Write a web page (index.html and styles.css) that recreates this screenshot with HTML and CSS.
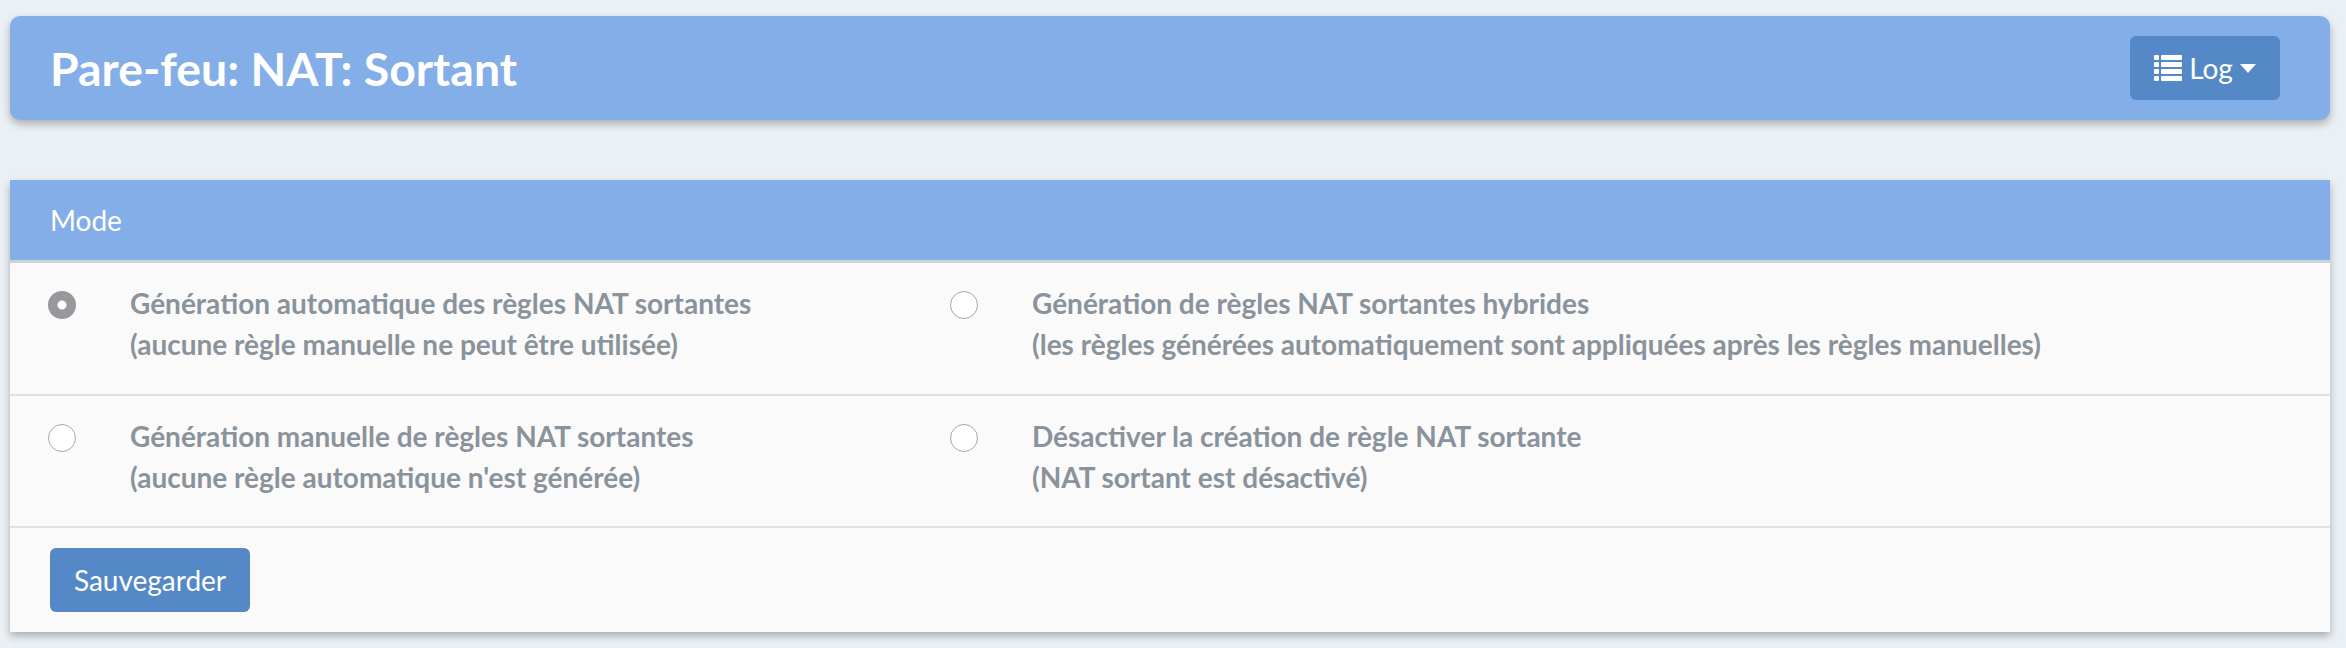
FILE: index.html
```html
<!DOCTYPE html>
<html lang="fr">

<head>
    <meta charset="UTF-8">
    <title>Pare-feu: NAT: Sortant</title>
    <link rel="stylesheet" href="styles.css">
</head>

<body>
    <header class="pageHeader">
        <h1>Pare-feu: NAT: Sortant</h1>
        <button class="btn logBtn">
            <svg class="listIcon" viewBox="0 0 28 26" width="28" height="26">
                <rect x="0" y="0" width="5" height="5" rx="1"></rect>
                <rect x="0" y="7" width="5" height="5" rx="1"></rect>
                <rect x="0" y="14" width="5" height="5" rx="1"></rect>
                <rect x="0" y="21" width="5" height="5" rx="1"></rect>
                <rect x="7" y="0" width="21" height="5" rx="1"></rect>
                <rect x="7" y="7" width="21" height="5" rx="1"></rect>
                <rect x="7" y="14" width="21" height="5" rx="1"></rect>
                <rect x="7" y="21" width="21" height="5" rx="1"></rect>
            </svg>
            <span>Log</span>
            <span class="caret"></span>
        </button>
    </header>

    <section class="panel">
        <h2 class="panelTitle">Mode</h2>
        <div class="modeRow">
            <label class="modeOption">
                <input type="radio" name="mode" checked>
                <span>Génération automatique des règles NAT sortantes<br>(aucune règle manuelle ne peut être utilisée)</span>
            </label>
            <label class="modeOption">
                <input type="radio" name="mode">
                <span>Génération de règles NAT sortantes hybrides<br>(les règles générées automatiquement sont appliquées après les règles manuelles)</span>
            </label>
        </div>
        <div class="modeRow">
            <label class="modeOption">
                <input type="radio" name="mode">
                <span>Génération manuelle de règles NAT sortantes<br>(aucune règle automatique n'est générée)</span>
            </label>
            <label class="modeOption">
                <input type="radio" name="mode">
                <span>Désactiver la création de règle NAT sortante<br>(NAT sortant est désactivé)</span>
            </label>
        </div>
        <div class="panelFooter">
            <button class="btn saveBtn">Sauvegarder</button>
        </div>
    </section>
</body>

</html>
```

FILE: styles.css
```css
html {
    background-color: #ebf0f4;
}

body {
    margin: 0;
    padding: 16px 16px 16px 10px;
    font-family: "Lato", sans-serif;
}

.pageHeader {
    height: 104px;
    padding: 0 50px 0 40px;
    display: flex;
    justify-content: space-between;
    align-items: center;
    background-color: #83aee7;
    border-radius: 10px;
    box-shadow: 0 4px 8px rgba(0, 0, 0, 0.28);
}

.pageHeader h1 {
    margin: 0;
    color: white;
    font-size: 46.4px;
    font-weight: 700;
}

.btn {
    color: white;
    background-color: #5488c6;
    border: 0;
    border-radius: 6px;
    height: 64px;
    font-family: inherit;
    font-size: 28px;
    font-weight: 400;
}

.logBtn {
    width: 150px;
    display: flex;
    justify-content: center;
    align-items: center;
    gap: 7px;
}

.listIcon {
    fill: white;
}

.caret {
    width: 0;
    height: 0;
    border-left: 8px solid transparent;
    border-right: 8px solid transparent;
    border-top: 9px solid white;
}

.panel {
    margin-top: 60px;
    background-color: #fafafa;
    box-shadow: 0 4px 8px rgba(0, 0, 0, 0.28);
}

.panelTitle {
    margin: 0;
    height: 80px;
    padding: 0 40px;
    display: flex;
    align-items: center;
    background-color: #83aee7;
    border-bottom: 3px solid #cfd2d4;
    color: white;
    font-size: 28px;
    font-weight: 400;
}

.modeRow {
    height: 130.5px;
    display: grid;
    grid-template-columns: 902px 1fr;
    border-bottom: 2px solid #dfe1e3;
}

.modeOption {
    padding: 20px 0 0 38px;
    display: flex;
    color: #8a939b;
    font-size: 28px;
    font-weight: 700;
    line-height: 41px;
}

.modeOption input {
    appearance: none;
    flex: none;
    width: 28px;
    height: 28px;
    margin: 8px 54px 0 0;
    background-color: white;
    border: 1px solid #a8a8a8;
    border-radius: 50%;
}

.modeOption input:checked {
    background-color: #98979c;
    border: 0;
    background-image: radial-gradient(circle, white 0, white 4px, #98979c 5px);
}

.panelFooter {
    padding: 20px 40px;
}

.saveBtn {
    width: 200px;
}
```
